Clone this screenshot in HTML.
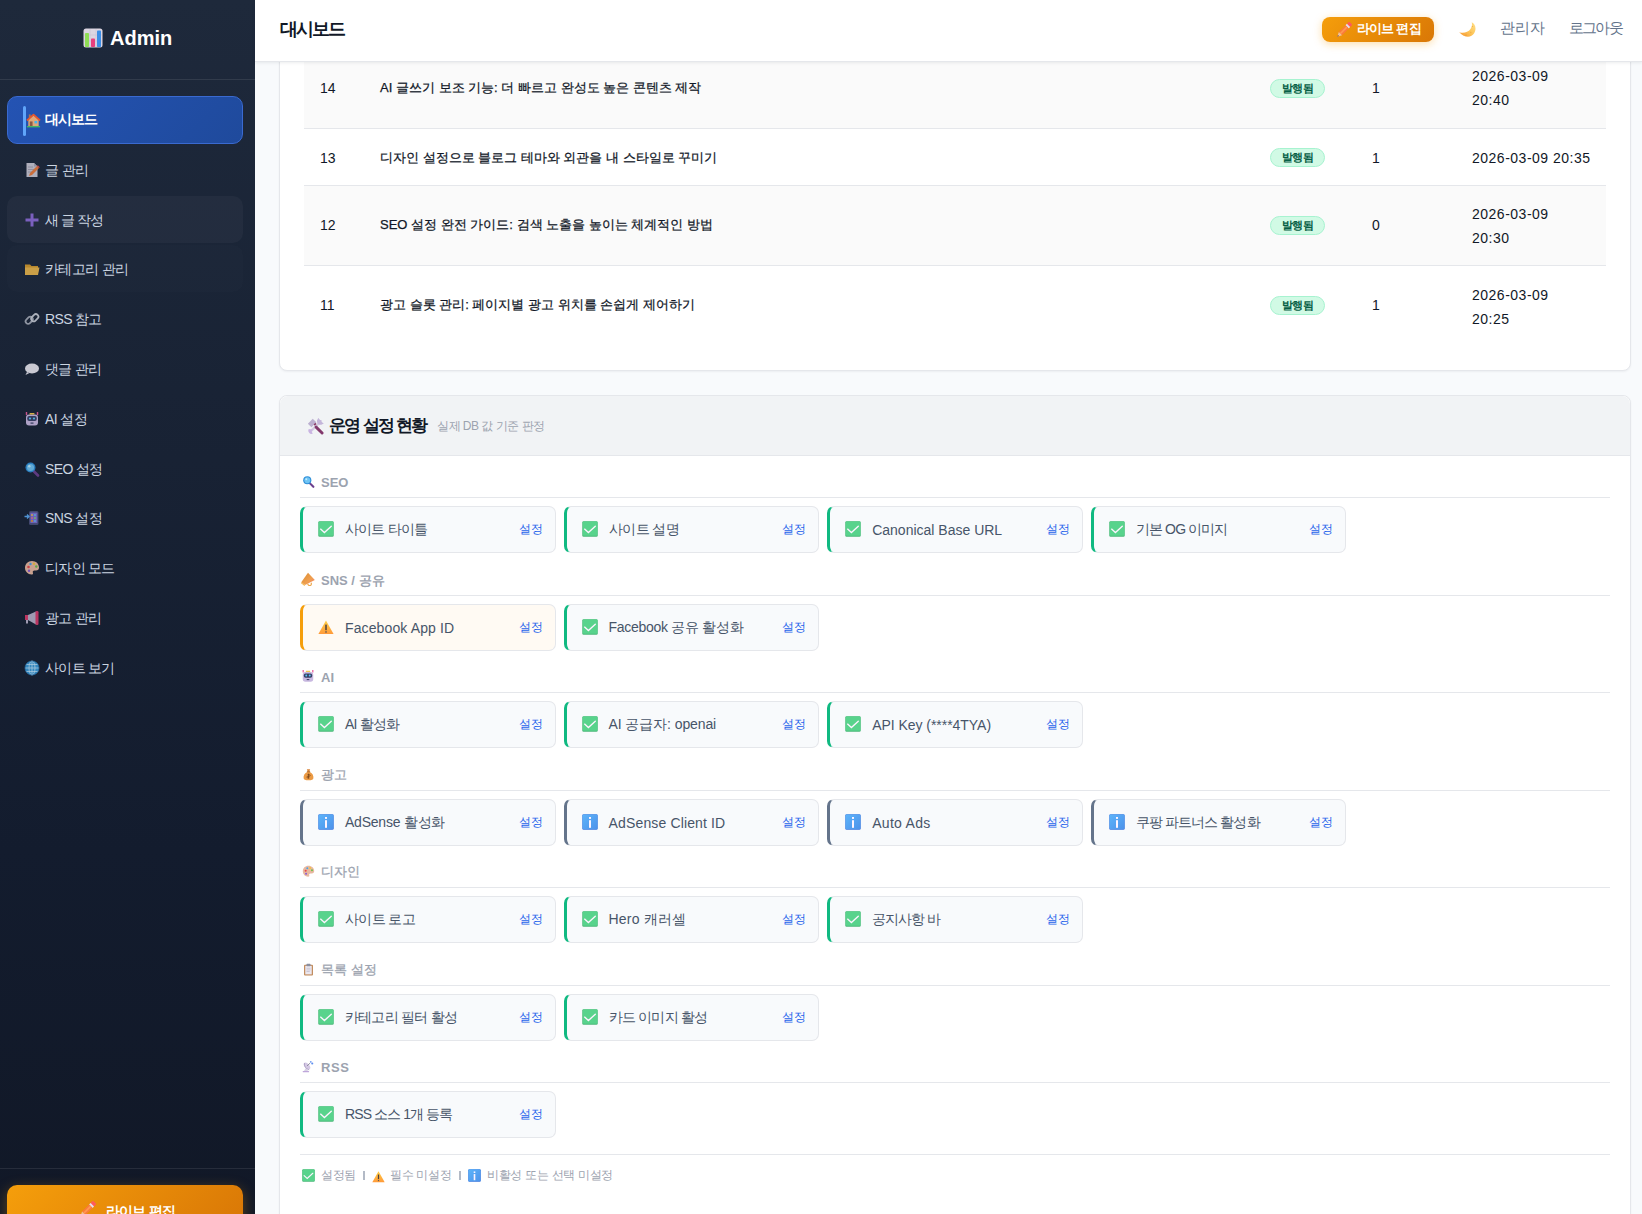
<!DOCTYPE html>
<html lang="ko">
<head>
<meta charset="utf-8">
<title>Admin</title>
<style>
*{box-sizing:border-box;margin:0;padding:0}
html,body{width:1642px;height:1214px;overflow:hidden}
body{font-family:"Liberation Sans",sans-serif;background:#f8fafc;color:#111827;position:relative}
svg.i{display:inline-block;vertical-align:middle}
/* sidebar */
#sb{position:absolute;left:0;top:0;width:255px;height:1214px;background:linear-gradient(180deg,#1e293b 0%,#131c2e 70%,#111827 100%);overflow:hidden}
#logo{position:absolute;left:0;top:0;width:255px;height:80px;border-bottom:1px solid rgba(255,255,255,.09)}
#logo svg{position:absolute;left:83px;top:28px}
#logo span{position:absolute;left:110px;top:27px;font-size:20px;font-weight:700;color:#fff}
.nav{position:absolute;left:7px;width:236px;height:47px;border-radius:10px;color:#cbd5e1;font-size:14px}
.nav svg{position:absolute;left:17px;top:16px;width:16px;height:16px;opacity:.85}
.nav span{position:absolute;left:38px;top:16px;white-space:nowrap}
.nav.act{height:48px;background:linear-gradient(135deg,#2453b3,#1f4a9c);border:1px solid #3a6ad0;color:#fff;font-weight:700}
.nav.act svg{opacity:1}
.nav.act .bar{position:absolute;left:15px;top:9px;width:3px;height:30px;border-radius:2px;background:#60a5fa}
.nav.h1{background:rgba(255,255,255,.035)}
.nav.h2{background:rgba(255,255,255,.012)}
#sbfoot{position:absolute;left:0;top:1168px;width:255px;height:1px;background:rgba(255,255,255,.09)}
#sbbtn{position:absolute;left:7px;top:1185px;width:236px;height:44px;border-radius:10px;background:linear-gradient(135deg,#f59e0b,#d97706);box-shadow:0 4px 14px rgba(245,158,11,.35);color:#fff;font-weight:700;font-size:14px}
#sbbtn svg{position:absolute;left:72px;top:16px}
#sbbtn span{position:absolute;left:99px;top:18px;letter-spacing:-.8px;white-space:nowrap}
/* header */
#hd{position:absolute;left:255px;top:0;width:1387px;height:62px;background:#fff;box-shadow:0 1px 3px rgba(15,23,42,.08);border-bottom:1px solid #e5e7eb;z-index:5}
#hd h1{position:absolute;left:25px;top:17px;font-size:18px;font-weight:600;color:#111827;letter-spacing:-2px}
#lvbtn{position:absolute;left:1067px;top:17px;width:112px;height:25px;border-radius:8px;background:linear-gradient(135deg,#f59e0b,#d97706);box-shadow:0 2px 8px rgba(245,158,11,.35);color:#fff;font-weight:700;font-size:13px}
#lvbtn svg{position:absolute;left:14px;top:5px}
#lvbtn span{position:absolute;left:35px;top:3px;white-space:nowrap;letter-spacing:-.8px}
#moonic{position:absolute;left:1204px;top:22px}
#hd .u{position:absolute;top:19px;font-size:15px;color:#64748b;white-space:nowrap}
/* main */
.card{position:absolute;left:279px;width:1352px;background:#fff;border:1px solid #e5e7eb;border-radius:8px;box-shadow:0 1px 2px rgba(15,23,42,.05)}
#c1{top:-200px;height:571px}
.row{position:absolute;left:24px;width:1302px;border-bottom:1px solid #e5e7eb;font-size:14px;color:#111827}
.row.st{background:#fafafa}
.row.last{border-bottom:none}
.row .n{position:absolute;left:16px}
.row .t{position:absolute;left:76px;font-size:13px;font-weight:400;white-space:nowrap;-webkit-text-stroke:.25px #111827}
.row .b{position:absolute;left:966px;width:55px;height:19px;border-radius:10px;background:#d1fae5;border:1px solid #a7f3d0;color:#065f46;font-size:11px;font-weight:700;text-align:center;line-height:17px;letter-spacing:-.45px}
.row .c{position:absolute;left:1068px}
.row .d{position:absolute;left:1168px;line-height:24px;letter-spacing:.5px}
#c2{top:395px;height:900px;overflow:hidden}
#c2 .hd2{position:absolute;left:0;top:0;width:100%;height:60px;background:#f1f3f5;border-bottom:1px solid #e5e7eb;border-radius:8px 8px 0 0}
#c2 .hd2 svg{position:absolute;left:27px;top:22px}
#c2 .hd2 b{position:absolute;left:49px;top:18px;font-size:17px;font-weight:700;color:#111827;letter-spacing:-2px;word-spacing:1px;white-space:nowrap}
#c2 .hd2 i{position:absolute;left:157px;top:22px;font-size:12px;font-style:normal;color:#9ca3af;letter-spacing:-.5px;white-space:nowrap}
.sec{position:absolute;left:20px;width:1310px}
.sec .lab{position:absolute;left:0;top:0;width:1310px;height:27px;border-bottom:1px solid #e5e7eb}
.sec .lab svg{position:absolute;left:2px;top:4px}
.sec .lab span{position:absolute;left:21px;top:4px;font-size:13px;font-weight:700;color:#9ca3af;white-space:nowrap}
.it{position:absolute;top:35px;width:255.6px;height:47px;background:#f8fafc;border:1px solid #e5e7eb;border-left:3px solid #10b981;border-radius:7px;font-size:14px;color:#475569}
.it.w{border-left-color:#f59e0b;background:#fffaf3}
.it.f{border-left-color:#64748b}
.it svg{position:absolute;left:15px;top:14px}
.it span{position:absolute;left:42px;top:14px;white-space:nowrap}
.it a{position:absolute;right:12px;top:14px;font-size:12px;color:#2563eb;text-decoration:none}
.legend{position:absolute;left:20px;top:758px;width:1310px;border-top:1px solid #e5e7eb}
.legend span{position:absolute;top:12px;font-size:12px;color:#9ca3af;white-space:nowrap;letter-spacing:-.3px}
.legend svg{position:absolute}
.legend i{position:absolute;top:16px;width:1.5px;height:9px;background:#b3bac6}
</style>
</head>
<body>
<svg width="0" height="0" style="position:absolute">
<defs>
<symbol id="ok" viewBox="0 0 16 16"><rect x="0.3" y="0.3" width="15.4" height="15.4" rx="1.3" fill="#49b878"/><rect x="0.8" y="0.6" width="14.6" height="14.2" rx="1" fill="#58d38c"/><path d="M2.6 8.1L6.4 11.6 13.3 5.2" fill="none" stroke="#fdf4ff" stroke-width="1.35" stroke-linecap="round" stroke-linejoin="miter"/></symbol>
<symbol id="warn" viewBox="0 0 16 16"><defs><linearGradient id="wg" x1="0" y1="0" x2="0" y2="1"><stop offset="0" stop-color="#ffce45"/><stop offset="1" stop-color="#ff9a3a"/></linearGradient></defs><path d="M8 1.6L15.6 15H0.4z" fill="url(#wg)"/><rect x="7.25" y="5.6" width="1.5" height="5.6" fill="#4a4040"/><rect x="7.25" y="12.2" width="1.5" height="1.5" fill="#6a5a50"/></symbol>
<symbol id="info" viewBox="0 0 16 16"><defs><linearGradient id="ig" x1="0" y1="0" x2="1" y2="1"><stop offset="0" stop-color="#5cb4fa"/><stop offset="1" stop-color="#4d92ea"/></linearGradient></defs><rect x="0.3" y="0.3" width="15.4" height="15.4" rx="1.3" fill="#3d76dc"/><rect x="0.6" y="0.4" width="14.8" height="14.8" rx="1.1" fill="url(#ig)"/><rect x="7" y="3" width="2" height="1.9" fill="#fdf4ff"/><rect x="7" y="6.2" width="2" height="7.6" fill="#fdf4ff"/></symbol>
<symbol id="chart" viewBox="0 0 20 20"><rect x="0.5" y="0.5" width="19" height="19" rx="2.5" fill="#dcd6e2"/><path d="M7 1v18M13 1v18M1 7h18M1 13h18" stroke="#c6bfd0" stroke-width=".5"/><rect x="2" y="5" width="4" height="14" rx=".8" fill="#8fdc55"/><rect x="8" y="10.5" width="4" height="8.5" rx=".8" fill="#e83f7d"/><rect x="14" y="2.5" width="4" height="16.5" rx=".8" fill="#3c8ee6"/></symbol>
<symbol id="house" viewBox="0 0 16 16"><rect x="3" y="1.5" width="2" height="4" fill="#a47454"/><path d="M2.5 7.5L8 2.5l5.5 5V14h-11z" fill="#e0a878"/><path d="M1 8L8 1.8 15 8" fill="none" stroke="#e8562c" stroke-width="1.8" stroke-linejoin="round"/><rect x="4" y="9" width="3" height="5" fill="#8a5a44"/><rect x="9" y="8.5" width="3" height="2.6" fill="#46b3f0"/><rect x="1" y="14" width="14" height="1.3" fill="#45c25a"/></symbol>
<symbol id="memo" viewBox="0 0 16 16"><path d="M2.5 1h7.5l3.5 3.5V15h-11z" fill="#c9c7d3"/><path d="M10 1v3.5h3.5" fill="#a8a5b5"/><path d="M4 5h5M4 7.5h6M4 10h4" stroke="#9a97a8" stroke-width=".8"/><path d="M5 14l1-3 7-7 2 2-7 7z" fill="#ea7b3c"/><path d="M13 4l2 2 .8-.8-2-2z" fill="#e84a4a"/></symbol>
<symbol id="plus" viewBox="0 0 16 16"><path d="M6.5 1.5h3v5h5v3h-5v5h-3v-5h-5v-3h5z" fill="#8b6ad6"/></symbol>
<symbol id="folder" viewBox="0 0 16 16"><path d="M1 3.5h5l1.5 1.5H14V13.5H1z" fill="#d49a2c"/><path d="M1 6.5h14.5L14 14H1z" fill="#e9b44a"/></symbol>
<symbol id="link" viewBox="0 0 16 16"><rect x="1.2" y="6.8" width="8" height="5" rx="2.5" transform="rotate(-45 5.2 9.3)" fill="none" stroke="#a3a8b4" stroke-width="1.8"/><rect x="6.8" y="4.2" width="8" height="5" rx="2.5" transform="rotate(-45 10.8 6.7)" fill="none" stroke="#c6cad3" stroke-width="1.8"/></symbol>
<symbol id="chat" viewBox="0 0 16 16"><ellipse cx="8" cy="7.5" rx="7" ry="5" fill="#e8e6ee"/><path d="M3 11l-1.5 3 4-2z" fill="#e8e6ee"/></symbol>
<symbol id="robot" viewBox="0 0 16 16"><path d="M2.5 1v3M13.5 1v3" stroke="#e85a9a" stroke-width="1.4"/><rect x="2" y="3.5" width="12" height="11" rx="3" fill="#c8b8e0"/><rect x="3.2" y="5" width="9.6" height="5" rx="2" fill="#394066"/><circle cx="6" cy="7.5" r="1.1" fill="#5bc6f5"/><circle cx="10" cy="7.5" r="1.1" fill="#5bc6f5"/><rect x="6.5" y="11.5" width="3" height="1.2" fill="#394066"/><rect x="5.5" y="2" width="5" height="1.5" rx=".6" fill="#f3c64c"/></symbol>
<symbol id="mag" viewBox="0 0 16 16"><path d="M9.5 10l4.5 4.5" stroke="#6b3f8e" stroke-width="2.6" stroke-linecap="round"/><circle cx="6.5" cy="6.5" r="5" fill="#2f8fd8"/><circle cx="6.5" cy="6.5" r="3.6" fill="#6fc4f4"/><circle cx="5.3" cy="5.2" r="1.2" fill="#c2ecff"/></symbol>
<symbol id="phone" viewBox="0 0 16 16"><rect x="5" y="1" width="9.5" height="14" rx="1.5" fill="#4a4f7a"/><rect x="6.3" y="2.6" width="7" height="10.5" fill="#7b6fd0"/><circle cx="8" cy="5" r=".9" fill="#f4c542"/><circle cx="11" cy="5" r=".9" fill="#5bc6f5"/><circle cx="8" cy="8" r=".9" fill="#ef6a8a"/><circle cx="11" cy="8" r=".9" fill="#86d66a"/><circle cx="8" cy="11" r=".9" fill="#f59e0b"/><circle cx="11" cy="11" r=".9" fill="#5bc6f5"/><path d="M.5 6.5h4M3 4.5l2 2-2 2" stroke="#5aa8f0" stroke-width="1.3" fill="none"/></symbol>
<symbol id="palette" viewBox="0 0 16 16"><path d="M8 1C3.8 1 1 4 1 7.8c0 3.8 3 6.7 6.5 6.7 1.4 0 1.8-.8 1.4-1.8-.5-1.2.2-2.2 1.5-2.2h1.6c2 0 3-1.3 3-3C15 3.8 12 1 8 1z" fill="#e8b8a0"/><circle cx="4.5" cy="7" r="1.3" fill="#e8484a"/><circle cx="6.5" cy="4" r="1.2" fill="#4aa3e8"/><circle cx="10" cy="3.8" r="1.2" fill="#f2c53c"/><circle cx="12.3" cy="6.5" r="1.2" fill="#6cc04a"/><circle cx="5" cy="10.8" r="1.2" fill="#8a5ad0"/></symbol>
<symbol id="mega" viewBox="0 0 16 16"><rect x="1" y="5" width="3" height="5" fill="#d83a6a"/><path d="M4 5l8-3.5v13L4 10z" fill="#b8b0c8"/><rect x="11.5" y="1" width="3" height="14" rx="1.2" fill="#d83a6a"/><rect x="2" y="10" width="2" height="3.5" fill="#b8b0c8"/></symbol>
<symbol id="globe" viewBox="0 0 16 16"><circle cx="8" cy="8" r="7" fill="#3a9ad8"/><g fill="none" stroke="#bfe4fa" stroke-width=".8"><ellipse cx="8" cy="8" rx="3" ry="7"/><path d="M8 1v14M1 8h14M2 4.5h12M2 11.5h12"/></g><circle cx="8" cy="8" r="7" fill="none" stroke="#2a7ab8" stroke-width=".8"/></symbol>
<symbol id="pencil" viewBox="0 0 16 16"><g transform="rotate(45 8 8)"><rect x="5.7" y="-1.6" width="4.6" height="3.4" rx="1.1" fill="#ff5a5c"/><rect x="5.7" y="1.6" width="4.6" height="2" fill="#e4ddf4"/><rect x="5.7" y="3.6" width="4.6" height="9.4" fill="#fb7a3c"/><rect x="7.2" y="3.6" width="1.6" height="9.4" fill="#ff9a50"/><path d="M5.7 13H10.3L8 17.4z" fill="#f0c09a"/><path d="M7.2 15.8H8.8L8 17.4z" fill="#6a4a4a"/></g></symbol>
<symbol id="moon" viewBox="0 0 17 16"><defs><linearGradient id="mng" x1="1" y1="0" x2="0" y2="1"><stop offset="0" stop-color="#ffe08a"/><stop offset=".5" stop-color="#fdc65a"/><stop offset="1" stop-color="#f7952e"/></linearGradient></defs><path d="M12.7 0.2C16.5 2 17.8 7 15 11.5 12.5 15.5 6 16.6 0.2 10.2 4 11.6 9 10.6 11.5 7 13 4.5 13.3 2.2 12.7 0.2z" fill="url(#mng)"/><circle cx="13.5" cy="4.5" r=".6" fill="#e59a3a" opacity=".7"/><circle cx="11.8" cy="10.5" r=".7" fill="#e8a040" opacity=".6"/><circle cx="7" cy="13" r=".6" fill="#d8802a" opacity=".6"/></symbol>
<symbol id="tools" viewBox="0 0 16 16"><path d="M3.3 12.7L12.2 3.8" stroke="#d3cae0" stroke-width="2.3"/><path d="M10 1.2a3.3 3.3 0 0 0 4.4 4.7l1.4-.7-2-1.5-.1-1.5-1.4-.4-1.7-1.9z" fill="#c4b6da"/><path d="M1.6 10.3a3.1 3.1 0 0 0 3.9 4.4l-1.2-1.7.3-1.5 1.3-.5z" fill="#c9b4e2"/><path d="M0.8 5.3L5.4 0.8l3.4 3.3-4.6 4.6z" fill="#bcb0d0"/><path d="M6.8 6.6l1.6-1.5" stroke="#8a3a66" stroke-width="1.6"/><path d="M8.6 8.6l5.6 5.6" stroke="#82386c" stroke-width="2.7" stroke-linecap="round"/></symbol>
<symbol id="mega2" viewBox="0 0 16 16"><defs><linearGradient id="mg2" x1="0" y1="0" x2="1" y2="1"><stop offset="0" stop-color="#d88a30"/><stop offset=".6" stop-color="#f0a050"/><stop offset="1" stop-color="#f07a6a"/></linearGradient></defs><path d="M8 0.8L15.8 9 4.6 14.8 0.3 11.8z" fill="url(#mg2)"/><path d="M0.3 11.8L4.6 14.8 4.1 16 0 12.9z" fill="#f2b54a"/><path d="M7.6 13.4q.9 2.6 2.9 2.1 1.9-.6 1.1-3.2" stroke="#eda648" stroke-width="1.3" fill="none"/></symbol>
<symbol id="bag" viewBox="0 0 16 16"><path d="M6 1.5h4L9 4.5H7z" fill="#d9853a"/><path d="M7 4.5h2c4 1.5 5.5 5 5 8-.3 1.8-2 2.5-6 2.5S2.3 14.3 2 12.5c-.5-3 1-6.5 5-8z" fill="#eb9a44"/><rect x="6" y="4" width="4" height="1.2" fill="#b06a2a"/><path d="M8 7v6M6.8 8.2h2.2a1 1 0 0 1 0 2H7a1 1 0 0 0 0 2h2.2" stroke="#6a3a14" stroke-width=".8" fill="none"/></symbol>
<symbol id="clip" viewBox="0 0 16 16"><rect x="2.5" y="2" width="11" height="13.5" rx="1.2" fill="#c08a5a"/><rect x="4" y="3.5" width="8" height="10.5" fill="#ece8f0"/><rect x="5.5" y="1" width="5" height="3" rx=".8" fill="#8a8fa0"/><path d="M5.5 6.5h5M5.5 8.5h5M5.5 10.5h4" stroke="#b7b3c4" stroke-width=".8"/></symbol>
<symbol id="dish" viewBox="0 0 16 16"><rect x="0.8" y="13.6" width="8" height="1.4" rx=".5" fill="#bea6da"/><path d="M2.4 13.6L4.8 9.5 7.6 13.6z" fill="#d9d2e6"/><ellipse cx="6.2" cy="7.3" rx="2.8" ry="5" transform="rotate(-42 6.2 7.3)" fill="#d4c8e4"/><path d="M3 3.6q-1 6 5.8 8.6" stroke="#a89ac0" stroke-width="1" fill="none"/><path d="M6.3 7.2L10 3.8" stroke="#707080" stroke-width=".9"/><circle cx="10.8" cy="2.2" r="1.1" fill="#6f9af2"/><circle cx="12.6" cy="4.3" r="1.3" fill="#5f8ff0"/></symbol>
</defs>
</svg>

<!-- SIDEBAR -->
<div id="sb">
  <div id="logo"><svg class="i" width="20" height="20"><use href="#chart"/></svg><span>Admin</span></div>
  <div class="nav act" style="top:96px"><div class="bar"></div><svg width="15" height="15" style="left:18px;top:16px;width:15px;height:15px"><use href="#house"/></svg><span style="left:37px;top:14px;letter-spacing:-1px">대시보드</span></div>
  <div class="nav" style="top:146px"><svg width="14" height="14"><use href="#memo"/></svg><span style="letter-spacing:-0.57px">글 관리</span></div>
  <div class="nav h1" style="top:196px"><svg width="14" height="14"><use href="#plus"/></svg><span style="letter-spacing:-0.88px">새 글 작성</span></div>
  <div class="nav h2" style="top:245px"><svg width="14" height="14"><use href="#folder"/></svg><span style="letter-spacing:-0.67px">카테고리 관리</span></div>
  <div class="nav" style="top:295px"><svg width="14" height="14"><use href="#link"/></svg><span style="letter-spacing:-0.66px">RSS 참고</span></div>
  <div class="nav" style="top:345px"><svg width="14" height="14"><use href="#chat"/></svg><span style="letter-spacing:-0.65px">댓글 관리</span></div>
  <div class="nav" style="top:395px"><svg width="14" height="14"><use href="#robot"/></svg><span style="letter-spacing:-0.55px">AI 설정</span></div>
  <div class="nav" style="top:445px"><svg width="14" height="14"><use href="#mag"/></svg><span style="letter-spacing:-0.6px">SEO 설정</span></div>
  <div class="nav" style="top:494px"><svg width="14" height="14"><use href="#phone"/></svg><span style="letter-spacing:-0.6px">SNS 설정</span></div>
  <div class="nav" style="top:544px"><svg width="14" height="14"><use href="#palette"/></svg><span style="letter-spacing:-0.7px">디자인 모드</span></div>
  <div class="nav" style="top:594px"><svg width="14" height="14"><use href="#mega"/></svg><span style="letter-spacing:-0.7px">광고 관리</span></div>
  <div class="nav" style="top:644px"><svg width="14" height="14"><use href="#globe"/></svg><span style="letter-spacing:-0.7px">사이트 보기</span></div>
  <div id="sbfoot"></div>
  <div id="sbbtn"><svg width="17" height="17"><use href="#pencil"/></svg><span>라이브 편집</span></div>
</div>

<!-- HEADER -->
<div id="hd">
  <h1>대시보드</h1>
  <div id="lvbtn"><svg width="16" height="16"><use href="#pencil"/></svg><span>라이브 편집</span></div>
  <svg id="moonic" width="17" height="16"><use href="#moon"/></svg>
  <span class="u" style="left:1245px">관리자</span>
  <span class="u" style="left:1314px;letter-spacing:-1.8px">로그아웃</span>
</div>

<!-- CARD 1 : posts table -->
<div class="card" id="c1">
  <div class="row st" style="top:247px;height:81px"><span class="n" style="top:32px">14</span><span class="t" style="top:31px">AI 글쓰기 보조 기능: 더 빠르고 완성도 높은 콘텐츠 제작</span><span class="b" style="top:31px">발행됨</span><span class="c" style="top:32px">1</span><span class="d" style="top:16px">2026-03-09<br>20:40</span></div>
  <div class="row" style="top:328px;height:57px"><span class="n" style="top:21px">13</span><span class="t" style="top:20px">디자인 설정으로 블로그 테마와 외관을 내 스타일로 꾸미기</span><span class="b" style="top:19px">발행됨</span><span class="c" style="top:21px">1</span><span class="d" style="top:17px">2026-03-09 20:35</span></div>
  <div class="row st" style="top:385px;height:80px"><span class="n" style="top:31px">12</span><span class="t" style="top:30px">SEO 설정 완전 가이드: 검색 노출을 높이는 체계적인 방법</span><span class="b" style="top:30px">발행됨</span><span class="c" style="top:31px">0</span><span class="d" style="top:16px">2026-03-09<br>20:30</span></div>
  <div class="row last" style="top:465px;height:80px"><span class="n" style="top:31px">11</span><span class="t" style="top:30px">광고 슬롯 관리: 페이지별 광고 위치를 손쉽게 제어하기</span><span class="b" style="top:30px">발행됨</span><span class="c" style="top:31px">1</span><span class="d" style="top:17px">2026-03-09<br>20:25</span></div>
</div>

<!-- CARD 2 : settings status -->
<div class="card" id="c2">
  <div class="hd2"><svg width="17" height="17"><use href="#tools"/></svg><b>운영 설정 현황</b><i>실제 DB 값 기준 판정</i></div>

  <div class="sec" style="top:75px">
    <div class="lab"><svg width="13" height="13"><use href="#mag"/></svg><span>SEO</span></div>
    <div class="it" style="left:0"><svg width="16" height="16"><use href="#ok"/></svg><span style="letter-spacing:-0.82px">사이트 타이틀</span><a>설정</a></div>
    <div class="it" style="left:263.6px"><svg width="16" height="16"><use href="#ok"/></svg><span style="letter-spacing:-0.54px">사이트 설명</span><a>설정</a></div>
    <div class="it" style="left:527.2px"><svg width="16" height="16"><use href="#ok"/></svg><span style="letter-spacing:0px;top:15px">Canonical Base URL</span><a>설정</a></div>
    <div class="it" style="left:790.8px"><svg width="16" height="16"><use href="#ok"/></svg><span style="letter-spacing:-0.86px">기본 OG 이미지</span><a>설정</a></div>
  </div>

  <div class="sec" style="top:173px">
    <div class="lab"><svg width="14" height="14" style="left:1px;top:3px"><use href="#mega2"/></svg><span style="top:3px">SNS / 공유</span></div>
    <div class="it w" style="left:0"><svg width="16" height="16"><use href="#warn"/></svg><span style="letter-spacing:0.12px;top:15px">Facebook App ID</span><a>설정</a></div>
    <div class="it" style="left:263.6px"><svg width="16" height="16"><use href="#ok"/></svg><span style="letter-spacing:-0.29px">Facebook 공유 활성화</span><a>설정</a></div>
  </div>

  <div class="sec" style="top:270px">
    <div class="lab"><svg width="14" height="14" style="left:1px;top:3px"><use href="#robot"/></svg><span>AI</span></div>
    <div class="it" style="left:0"><svg width="16" height="16"><use href="#ok"/></svg><span style="letter-spacing:-0.78px">AI 활성화</span><a>설정</a></div>
    <div class="it" style="left:263.6px"><svg width="16" height="16"><use href="#ok"/></svg><span style="letter-spacing:-0.1px">AI 공급자: openai</span><a>설정</a></div>
    <div class="it" style="left:527.2px"><svg width="16" height="16"><use href="#ok"/></svg><span style="letter-spacing:-0.04px;top:15px">API Key (****4TYA)</span><a>설정</a></div>
  </div>

  <div class="sec" style="top:367.6px">
    <div class="lab"><svg width="13" height="13"><use href="#bag"/></svg><span style="font-weight:400;top:2px;-webkit-text-stroke:.3px #9ca3af">광고</span></div>
    <div class="it f" style="left:0"><svg width="16" height="16"><use href="#info"/></svg><span style="letter-spacing:-0.23px">AdSense 활성화</span><a>설정</a></div>
    <div class="it f" style="left:263.6px"><svg width="16" height="16"><use href="#info"/></svg><span style="letter-spacing:0.14px;top:15px">AdSense Client ID</span><a>설정</a></div>
    <div class="it f" style="left:527.2px"><svg width="16" height="16"><use href="#info"/></svg><span style="letter-spacing:0.3px;top:15px">Auto Ads</span><a>설정</a></div>
    <div class="it f" style="left:790.8px"><svg width="16" height="16"><use href="#info"/></svg><span style="letter-spacing:-0.9px">쿠팡 파트너스 활성화</span><a>설정</a></div>
  </div>

  <div class="sec" style="top:465px">
    <div class="lab"><svg width="13" height="13"><use href="#palette"/></svg><span style="font-weight:400;top:2px;-webkit-text-stroke:.3px #9ca3af">디자인</span></div>
    <div class="it" style="left:0"><svg width="16" height="16"><use href="#ok"/></svg><span style="letter-spacing:-0.66px">사이트 로고</span><a>설정</a></div>
    <div class="it" style="left:263.6px"><svg width="16" height="16"><use href="#ok"/></svg><span style="letter-spacing:0.16px">Hero 캐러셀</span><a>설정</a></div>
    <div class="it" style="left:527.2px"><svg width="16" height="16"><use href="#ok"/></svg><span style="letter-spacing:-0.96px">공지사항 바</span><a>설정</a></div>
  </div>

  <div class="sec" style="top:562.6px">
    <div class="lab"><svg width="13" height="13"><use href="#clip"/></svg><span style="font-weight:400;top:2px;-webkit-text-stroke:.3px #9ca3af">목록 설정</span></div>
    <div class="it" style="left:0"><svg width="16" height="16"><use href="#ok"/></svg><span style="letter-spacing:-0.77px">카테고리 필터 활성</span><a>설정</a></div>
    <div class="it" style="left:263.6px"><svg width="16" height="16"><use href="#ok"/></svg><span style="letter-spacing:-0.75px">카드 이미지 활성</span><a>설정</a></div>
  </div>

  <div class="sec" style="top:660px">
    <div class="lab"><svg width="13" height="13"><use href="#dish"/></svg><span style="letter-spacing:.6px">RSS</span></div>
    <div class="it" style="left:0"><svg width="16" height="16"><use href="#ok"/></svg><span style="letter-spacing:-0.91px">RSS 소스 1개 등록</span><a>설정</a></div>
  </div>

  <div class="legend">
    <svg width="13" height="13" style="left:2px;top:14px"><use href="#ok"/></svg><span style="left:21px">설정됨</span><i style="left:63px"></i>
    <svg width="13" height="13" style="left:72px;top:15px"><use href="#warn"/></svg><span style="left:90px">필수 미설정</span><i style="left:159px"></i>
    <svg width="13" height="13" style="left:168px;top:14px"><use href="#info"/></svg><span style="left:187px">비활성 또는 선택 미설정</span>
  </div>
</div>
</body>
</html>
